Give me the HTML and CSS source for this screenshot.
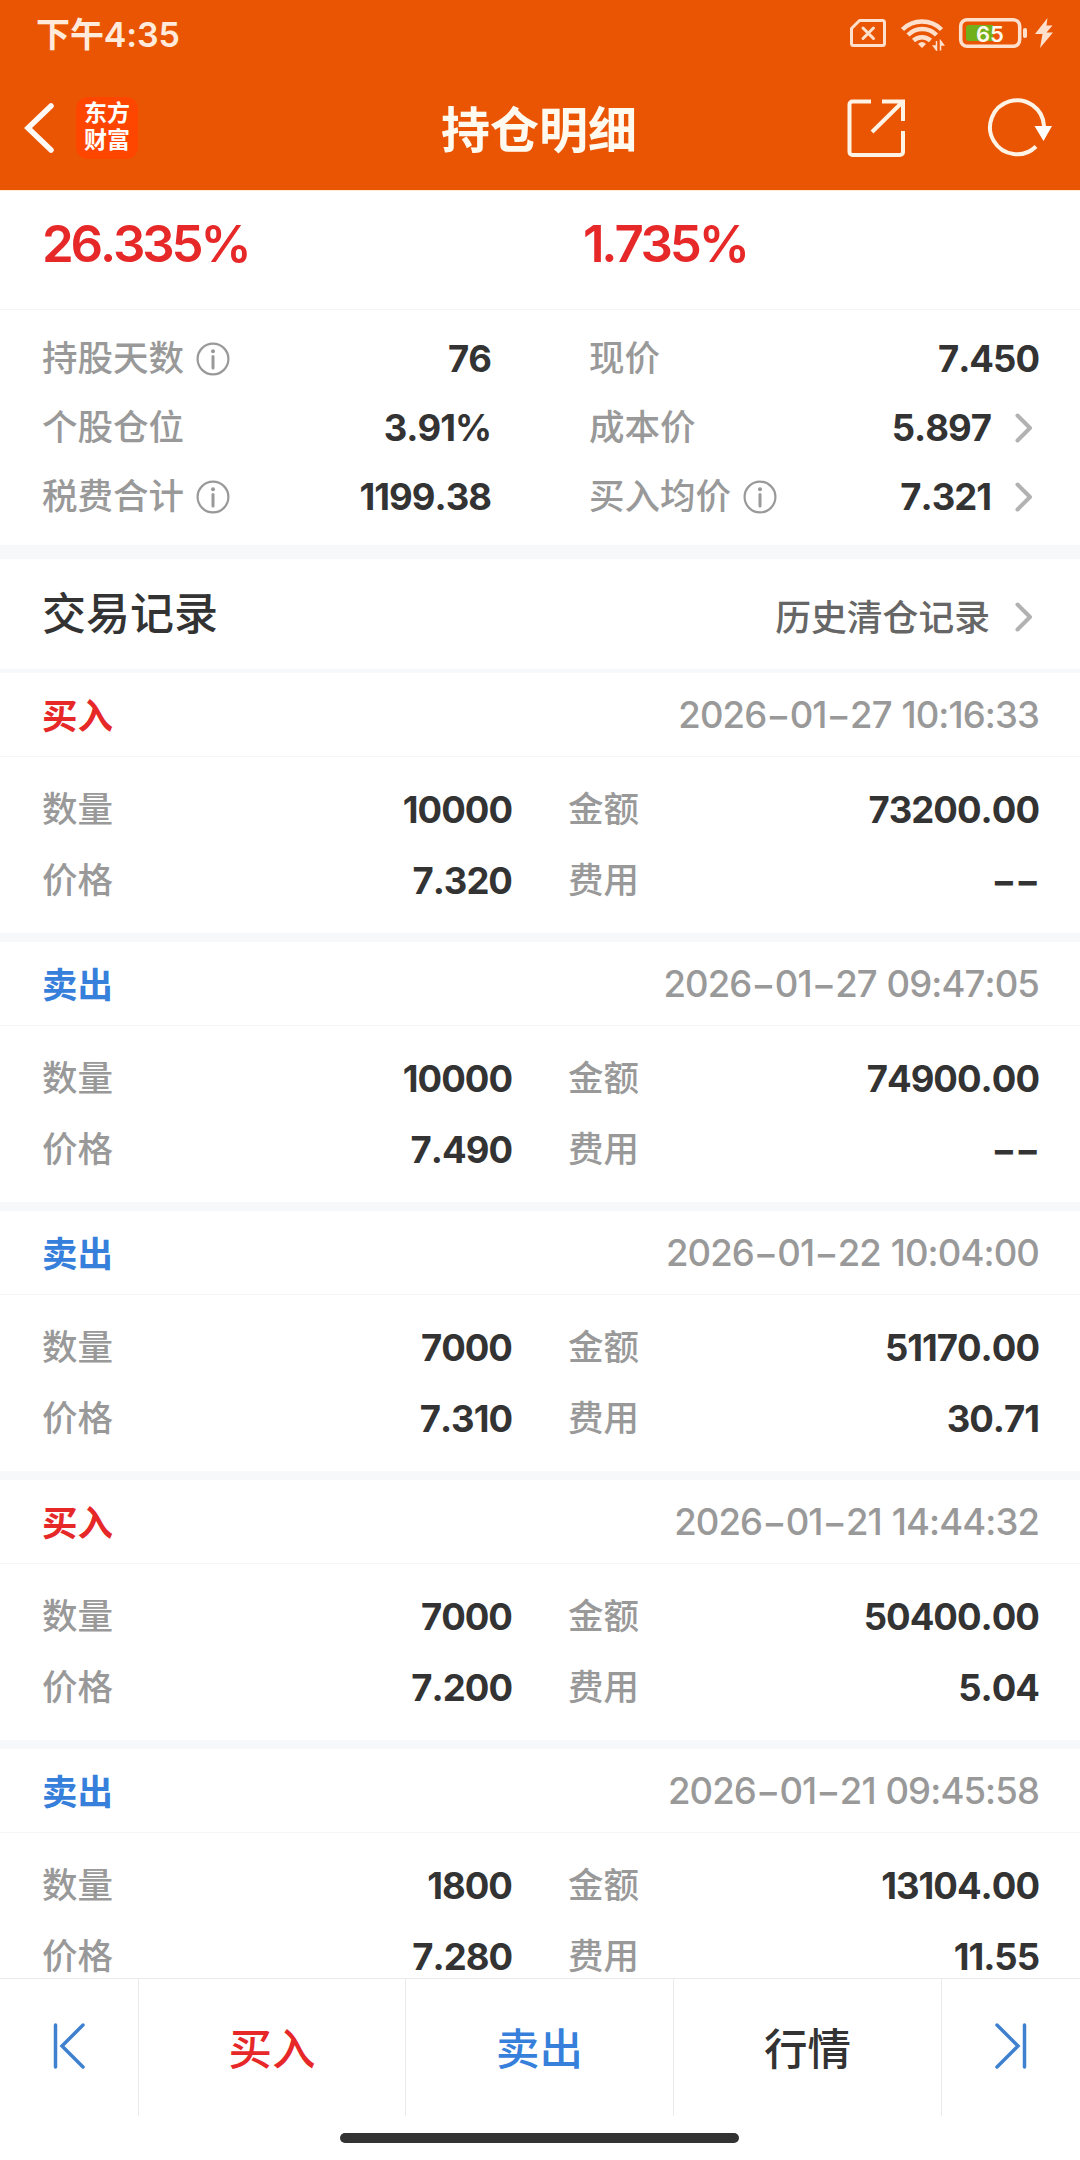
FILE: index.html
```
<!DOCTYPE html>
<html lang="zh-CN">
<head>
  <meta charset="UTF-8" />
  <title>持仓明细</title>
  <link rel="stylesheet" href="styles.css">
</head>
<body>

<!-- Icônes réutilisées -->
<svg class="defs">
  <symbol id="info" viewBox="0 0 34 34">
    <circle cx="17" cy="17" r="15.4" fill="none" stroke="#999" stroke-width="2.2"/>
    <circle cx="17" cy="9.2" r="2" fill="#999"/>
    <path d="M17 14.5v11.5" fill="none" stroke="#999" stroke-width="3" stroke-linecap="round"/>
  </symbol>
  <symbol id="arrow" viewBox="0 0 18 30">
    <path d="M2.5 2.5L15 15 2.5 27.5" fill="none" stroke="#b2b2b2" stroke-width="4" stroke-linecap="round" stroke-linejoin="round"/>
  </symbol>
</svg>

<div class="page">
  <header>
    <div class="status">
      <span class="time">下午4:35</span>
      <svg width="204" height="36" viewBox="850 15 204 36">
        <path d="M859.5 20.5H882.5a2 2 0 0 1 2 2V43.500a2 2 0 0 1-2 2H853.500a2 2 0 0 1-2-2V28.500z" fill="none" stroke="#ffe0cc" stroke-width="3" stroke-linejoin="round"/>
        <path d="M863 28l10.500 10.500M873.500 28L863 38.500" stroke="#ffe0cc" stroke-width="3" stroke-linecap="round"/>
        <g fill="none" stroke="#ffe0cc" stroke-width="4.500">
          <path d="M902.500 29.500A28 28 0 0 1 941.500 29.500"/>
          <path d="M908 35A20 20 0 0 1 936.500 35"/>
          <path d="M913.500 40.500A12.500 12.500 0 0 1 930.500 40.500"/>
        </g>
        <path d="M922 48l-4-4q4-4 8 0z" fill="#ffe0cc"/>
        <path d="M936.500 41v9.500M936.500 50l-3-4h3zM940.500 50.500V41M940.500 41l3 4h-3z" fill="#ffe0cc" stroke="#ffe0cc" stroke-width="1.500"/>
        <rect x="960.700" y="19.700" width="59" height="26.600" rx="6.500" fill="none" stroke="#ffe0cc" stroke-width="3.500"/>
        <path d="M969 25H993V41H969a3 3 0 0 1-3-3V28a3 3 0 0 1 3-3z" fill="#71b01b"/>
        <rect x="1023" y="28" width="4" height="10" rx="1.800" fill="#ffe0cc"/>
        <text class="battery" x="990" y="41.500" text-anchor="middle">65</text>
        <path d="M1047.500 18L1035 34h7.500L1040 48l13-15.500h-6.500L1052.500 25.500h-6z" fill="#ffe0cc"/>
      </svg>
    </div>
    <div class="navbar">
      <div class="nav-left">
        <svg width="30" height="50" viewBox="0 0 30 50"><path d="M27 3L4 25 27 47" fill="none" stroke="#fffaf5" stroke-width="5.500" stroke-linecap="round"/></svg>
        <div class="logo"><span>东方</span><span>财富</span></div>
      </div>
      <h1>持仓明细</h1>
      <div class="nav-right">
        <svg width="60" height="60" viewBox="0 0 60 60" fill="none" stroke="#fff3e6" stroke-width="4">
          <path d="M24 3.500H5.500a3 3 0 0 0-3 3V54a3 3 0 0 0 3 3H53a3 3 0 0 0 3-3V33"/>
          <path d="M35 3.500H56V23M56 3.500L25 34"/>
        </svg>
        <svg width="66" height="60" viewBox="0 0 66 60">
          <path d="M57 28A27 27 0 1 0 49 48.500" fill="none" stroke="#fff3e6" stroke-width="4"/>
          <path d="M47.500 28H65L56.500 43z" fill="#fff"/>
        </svg>
      </div>
    </div>
  </header>

  <section class="profit">
    <div>26.335%</div>
    <div>1.735%</div>
  </section>

  <section class="summary">
    <div class="cell"><label>持股天数</label><svg class="info"><use href="#info"/></svg><b>76</b></div>
    <div class="cell"><label>现价</label><b>7.450</b></div>
    <div class="cell"><label>个股仓位</label><b>3.91%</b></div>
    <div class="cell"><label>成本价</label><b>5.897</b><svg class="arrow"><use href="#arrow"/></svg></div>
    <div class="cell"><label>税费合计</label><svg class="info"><use href="#info"/></svg><b>1199.38</b></div>
    <div class="cell"><label>买入均价</label><svg class="info"><use href="#info"/></svg><b>7.321</b><svg class="arrow"><use href="#arrow"/></svg></div>
  </section>

  <section class="record-title">
    <h2>交易记录</h2>
    <span class="history">历史清仓记录</span>
    <svg class="arrow"><use href="#arrow"/></svg>
  </section>

  <main>
    <div class="card">
      <div class="card-head"><span class="buy">买入</span><time>2026−01−27 10:16:33</time></div>
      <div class="card-body">
        <div class="cell"><label>数量</label><b>10000</b></div>
        <div class="cell"><label>金额</label><b>73200.00</b></div>
        <div class="cell"><label>价格</label><b>7.320</b></div>
        <div class="cell"><label>费用</label><b>−−</b></div>
      </div>
    </div>
    <div class="card">
      <div class="card-head"><span class="sell">卖出</span><time>2026−01−27 09:47:05</time></div>
      <div class="card-body">
        <div class="cell"><label>数量</label><b>10000</b></div>
        <div class="cell"><label>金额</label><b>74900.00</b></div>
        <div class="cell"><label>价格</label><b>7.490</b></div>
        <div class="cell"><label>费用</label><b>−−</b></div>
      </div>
    </div>
    <div class="card">
      <div class="card-head"><span class="sell">卖出</span><time>2026−01−22 10:04:00</time></div>
      <div class="card-body">
        <div class="cell"><label>数量</label><b>7000</b></div>
        <div class="cell"><label>金额</label><b>51170.00</b></div>
        <div class="cell"><label>价格</label><b>7.310</b></div>
        <div class="cell"><label>费用</label><b>30.71</b></div>
      </div>
    </div>
    <div class="card">
      <div class="card-head"><span class="buy">买入</span><time>2026−01−21 14:44:32</time></div>
      <div class="card-body">
        <div class="cell"><label>数量</label><b>7000</b></div>
        <div class="cell"><label>金额</label><b>50400.00</b></div>
        <div class="cell"><label>价格</label><b>7.200</b></div>
        <div class="cell"><label>费用</label><b>5.04</b></div>
      </div>
    </div>
    <div class="card">
      <div class="card-head"><span class="sell">卖出</span><time>2026−01−21 09:45:58</time></div>
      <div class="card-body">
        <div class="cell"><label>数量</label><b>1800</b></div>
        <div class="cell"><label>金额</label><b>13104.00</b></div>
        <div class="cell"><label>价格</label><b>7.280</b></div>
        <div class="cell"><label>费用</label><b>11.55</b></div>
      </div>
    </div>
  </main>

  <footer>
    <nav>
      <div class="step"><svg width="34" height="46" viewBox="0 0 34 46"><path d="M3.500 2V44M31 2L10 23 31 44"/></svg></div>
      <div class="tab buy">买入</div>
      <div class="tab sell">卖出</div>
      <div class="tab">行情</div>
      <div class="step"><svg width="34" height="46" viewBox="0 0 34 46"><path d="M30.500 2V44M3 2L24 23 3 44"/></svg></div>
    </nav>
    <div class="home-bar"></div>
  </footer>
</div>

</body>
</html>
```
FILE: styles.css
```
* {
  box-sizing: border-box;
}

body {
  margin: 0;
  font-family: Inter, "Noto Sans CJK SC", sans-serif;
  font-kerning: none;
  color: #333;
  background: #fff;
}

.defs {
  display: none;
}

svg {
  display: block;
  flex-shrink: 0;
}

.page {
  width: 1080px;
  height: 2160px;
  display: flex;
  flex-direction: column;
  overflow: hidden;
}

/* En-tête */
header {
  height: 190px;
  flex-shrink: 0;
  background: #ea5504;
}

.status {
  height: 66px;
  padding: 0 26px 0 36px;
  display: flex;
  align-items: center;
  justify-content: space-between;
}

.time {
  padding-bottom: 2px;
  font-size: 34px;
  font-weight: 600;
  letter-spacing: -0.1px;
  color: #ffeadb;
}

.battery {
  font-size: 22px;
  font-weight: 600;
  fill: #fff8ee;
}

.navbar {
  height: 124px;
  padding: 0 27px 0 24px;
  display: grid;
  grid-template-columns: 1fr auto 1fr;
  align-items: center;
}

.nav-left {
  display: flex;
  align-items: center;
  gap: 22px;
}

.logo {
  width: 62px;
  height: 62px;
  border-radius: 12px;
  background: #ff4600;
  color: #fff;
  font-size: 23px;
  font-weight: 700;
  line-height: 27px;
  padding-bottom: 3px;
  display: flex;
  flex-direction: column;
  align-items: center;
  justify-content: center;
}

h1 {
  margin: 0;
  padding: 5px 0 0 1px;
  font-size: 49px;
  font-weight: 700;
  line-height: 60px;
  color: #fffaf0;
}

.nav-right {
  display: flex;
  justify-content: flex-end;
  gap: 80px;
}

/* Rendement */
.profit {
  height: 120px;
  flex-shrink: 0;
  padding: 0 42px;
  border-top: 1px solid #ffeed2;
  border-bottom: 1px solid #f5f5f5;
  display: grid;
  grid-template-columns: 541px 1fr;
  font-size: 51px;
  font-weight: 600;
  letter-spacing: -3.2px;
  line-height: 106px;
  color: #e62828;
}

/* Synthèse de la position */
.summary {
  height: 249px;
  flex-shrink: 0;
  padding: 14px 41px 0 42px;
  border-bottom: 14px solid #f7f8fa;
  display: grid;
  grid-template-columns: 449px 450px;
  grid-auto-rows: 69px;
  column-gap: 98px;
}

.cell {
  display: flex;
  align-items: center;
}

label {
  font-size: 35.5px;
  font-weight: 500;
  line-height: 40px;
  color: #999;
}

.cell b {
  margin-left: auto;
  font-size: 36.5px;
  font-weight: 700;
  letter-spacing: -1px;
}

.info {
  width: 34px;
  height: 34px;
  margin-left: 12px;
}

.arrow {
  width: 18px;
  height: 30px;
  margin-left: 24px;
  margin-right: 6px;
}

.record-title {
  height: 114px;
  flex-shrink: 0;
  padding: 0 41px 0 42px;
  border-bottom: 4px solid #f7f8fa;
  display: flex;
  align-items: center;
}

.record-title .arrow {
  margin-top: 5px;
  margin-left: 25px;
}

h2 {
  margin: 0;
  font-size: 44px;
  font-weight: 500;
  line-height: 60px;
}

.history {
  margin-left: auto;
  padding-top: 2px;
  font-size: 35.8px;
  font-weight: 500;
  color: #666;
}

/* Liste des opérations */
main {
  flex: 1;
  min-height: 0;
  overflow: hidden;
}

.card {
  height: 269px;
  border-bottom: 9px solid #f7f8fa;
}

.card-head {
  height: 84px;
  padding: 0 41px 0 42px;
  border-bottom: 1px solid #f5f5f5;
  display: flex;
  align-items: center;
  justify-content: space-between;
  font-size: 35.5px;
  font-weight: 700;
}

.card-head span {
  padding-bottom: 3px;
}

time {
  font-size: 36.5px;
  font-weight: 500;
  letter-spacing: -0.9px;
  word-spacing: 1px;
  color: #999;
}

.card-body {
  padding: 17px 41px 0 42px;
  display: grid;
  grid-template-columns: 470px 471px;
  grid-auto-rows: 71px;
  column-gap: 56px;
}

.buy {
  color: #e62828;
}

.sell {
  color: #3680db;
}

/* Barre du bas */
footer {
  height: 182px;
  flex-shrink: 0;
  border-top: 1px solid #ebebeb;
}

nav {
  height: 137px;
  display: grid;
  grid-template-columns: 138px 267px 268px 268px 139px;
}

nav div {
  padding-bottom: 3px;
  display: flex;
  align-items: center;
  justify-content: center;
}

nav div + div {
  border-left: 1px solid #ebebeb;
}

.tab {
  font-size: 43.5px;
  font-weight: 500;
}

.step path {
  fill: none;
  stroke: #3f80cf;
  stroke-width: 3.5;
  stroke-linecap: round;
}

.home-bar {
  width: 399px;
  height: 10px;
  margin: 17px 0 0 340px;
  border-radius: 5px;
  background: #333;
}
```
